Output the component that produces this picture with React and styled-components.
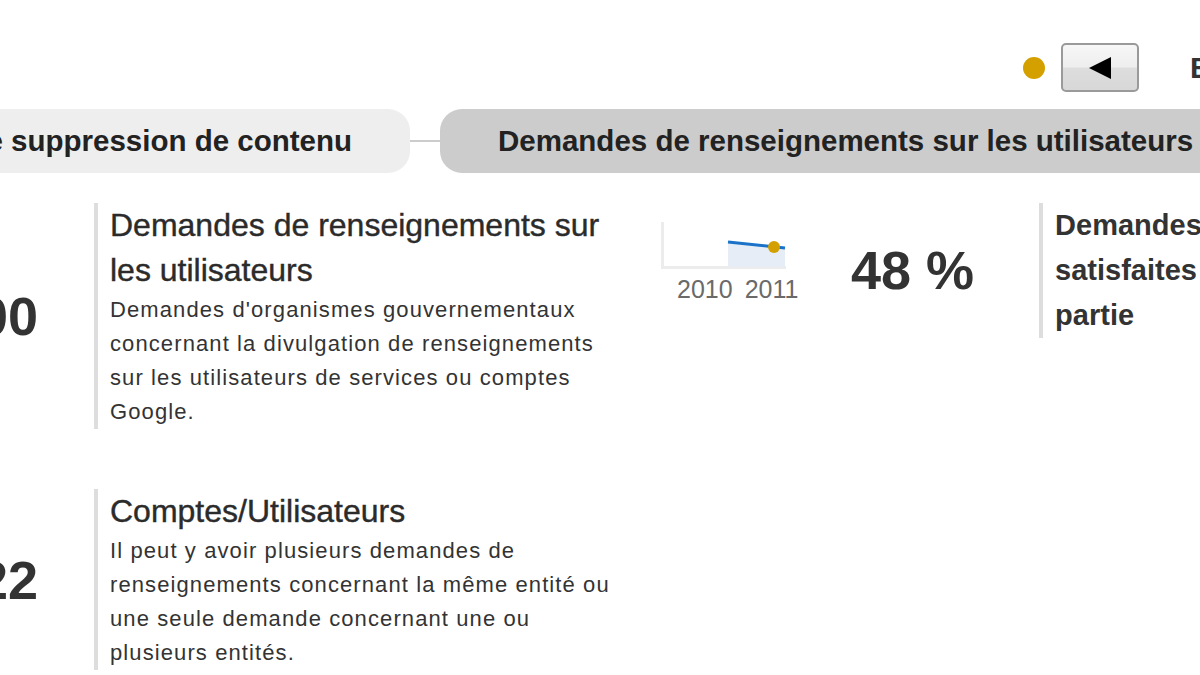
import styled, { createGlobalStyle } from 'styled-components';

const GlobalStyle = createGlobalStyle`
  html, body {
    margin: 0;
    padding: 0;
    background: #fff;
  }
`;

const Page = styled.div`
  width: 1200px;
  height: 675px;
  overflow: hidden;
  background: #fff;
  font-family: "Liberation Sans", Arial, sans-serif;
  color: #333;
`;

const Header = styled.div`
  display: flex;
  align-items: center;
  height: 49px;
  padding: 43px 0 0 1023px;
  white-space: nowrap;
`;
const Dot = styled.span`
  flex-shrink: 0;
  width: 22px;
  height: 22px;
  border-radius: 50%;
  background: #d4a000;
  margin-right: 16px;
`;
const NavButton = styled.button`
  flex-shrink: 0;
  display: flex;
  align-items: center;
  justify-content: center;
  box-sizing: border-box;
  width: 78px;
  height: 49px;
  padding: 0;
  margin-right: 51px;
  border: 2px solid #9a9a9a;
  border-radius: 5px;
  background: linear-gradient(#f7f7f7 0%, #eeeeee 48%, #dddddd 52%, #d8d8d8 100%);
  svg {
    width: 22px;
    height: 22px;
  }
`;
const RangeLabel = styled.span`
  font-size: 30px;
  font-weight: bold;
  color: #333;
`;

const Tabs = styled.div`
  display: flex;
  align-items: center;
  margin-top: 17px;
  white-space: nowrap;
`;
const Tab = styled.div`
  flex-shrink: 0;
  display: flex;
  align-items: center;
  justify-content: ${p => (p.$active ? 'flex-start' : 'flex-end')};
  box-sizing: border-box;
  height: 64px;
  padding: 0 58px;
  border-radius: 22px;
  background: ${p => (p.$active ? '#cccccc' : '#eeeeee')};
  font-size: 29.5px;
  font-weight: bold;
  color: #222;
  margin-left: ${p => (p.$offset ? `${p.$offset}px` : 0)};
  width: ${p => (p.$width ? `${p.$width}px` : 'auto')};
`;
const Connector = styled.span`
  flex-shrink: 0;
  width: 30px;
  height: 2px;
  background: #cccccc;
`;

const Content = styled.div`
  display: flex;
  flex-direction: column;
  gap: 60px;
  margin-top: 30px;
`;
const Row = styled.div`
  display: flex;
  align-items: flex-start;
`;
const Count = styled.div`
  flex-shrink: 0;
  align-self: center;
  width: 150px;
  margin-left: -112px;
  margin-right: 56px;
  text-align: right;
  font-size: 54px;
  font-weight: bold;
  line-height: 1;
  color: #333;
  white-space: nowrap;
`;
const Info = styled.div`
  flex-shrink: 0;
  width: 510px;
  padding-left: 12px;
  border-left: 4px solid #dddddd;
`;
const InfoTitle = styled.h3`
  margin: 0;
  font-size: 32px;
  font-weight: normal;
  line-height: 45px;
  color: #2b2b2b;
  -webkit-text-stroke: 0.4px #2b2b2b;
`;
const InfoText = styled.p`
  margin: 0;
  font-size: 22px;
  line-height: 34px;
  letter-spacing: 1.1px;
  color: #333;
`;

const Trend = styled.div`
  flex-shrink: 0;
  width: 140px;
  margin: 19px 0 0 40px;
  svg {
    display: block;
  }
`;
const TrendLabels = styled.div`
  display: flex;
  gap: 12px;
  margin-top: 6px;
  padding-left: 17px;
  font-size: 25px;
  line-height: 26px;
  color: #6a6a6a;
`;
const Percent = styled.div`
  flex-shrink: 0;
  margin: 40px 0 0 51px;
  font-size: 54px;
  font-weight: bold;
  line-height: 1;
  color: #333;
  white-space: nowrap;
`;
const Side = styled.div`
  flex-shrink: 0;
  width: 345px;
  margin-left: 65px;
  padding-left: 12px;
  border-left: 4px solid #dddddd;
  font-size: 29px;
  font-weight: bold;
  line-height: 45px;
  color: #333;
`;

const blocks = [
  {
    count: '1 300',
    title: 'Demandes de renseignements sur les utilisateurs',
    text: "Demandes d'organismes gouvernementaux concernant la divulgation de renseignements sur les utilisateurs de services ou comptes Google.",
  },
  {
    count: '1 722',
    title: 'Comptes/Utilisateurs',
    text: 'Il peut y avoir plusieurs demandes de renseignements concernant la même entité ou une seule demande concernant une ou plusieurs entités.',
  },
];

function Sparkline() {
  return (
    <svg width="126" height="48" viewBox="0 0 126 48">
      <rect x="1" y="0" width="3" height="47" fill="#ececec" />
      <rect x="1" y="44" width="125" height="3" fill="#ececec" />
      <polygon points="68,20 125,26 125,45 68,45" fill="#e6edf7" />
      <line x1="68" y1="20" x2="125" y2="26" stroke="#1a73c8" strokeWidth="3" />
      <circle cx="114" cy="25" r="6" fill="#d4a000" />
    </svg>
  );
}

function InfoBlock({ block }) {
  return (
    <>
      <Count>{block.count}</Count>
      <Info>
        <InfoTitle>{block.title}</InfoTitle>
        <InfoText>{block.text}</InfoText>
      </Info>
    </>
  );
}

export default function App() {
  return (
    <Page>
      <GlobalStyle />
      <Header>
        <Dot />
        <NavButton aria-label="Précédent">
          <svg viewBox="0 0 22 22">
            <polygon points="0,11 22,0 22,22" fill="#000" />
          </svg>
        </NavButton>
        <RangeLabel>Entre juillet et décembre 2011</RangeLabel>
      </Header>

      <Tabs>
        <Tab $offset={-200} $width={610}>Demandes de suppression de contenu</Tab>
        <Connector />
        <Tab $active>Demandes de renseignements sur les utilisateurs</Tab>
      </Tabs>

      <Content>
        <Row>
          <InfoBlock block={blocks[0]} />
          <Trend>
            <Sparkline />
            <TrendLabels>
              <span>2010</span>
              <span>2011</span>
            </TrendLabels>
          </Trend>
          <Percent>48&nbsp;%</Percent>
          <Side>Demandes de données satisfaites en tout ou en partie</Side>
        </Row>
        <Row>
          <InfoBlock block={blocks[1]} />
        </Row>
      </Content>
    </Page>
  );
}
